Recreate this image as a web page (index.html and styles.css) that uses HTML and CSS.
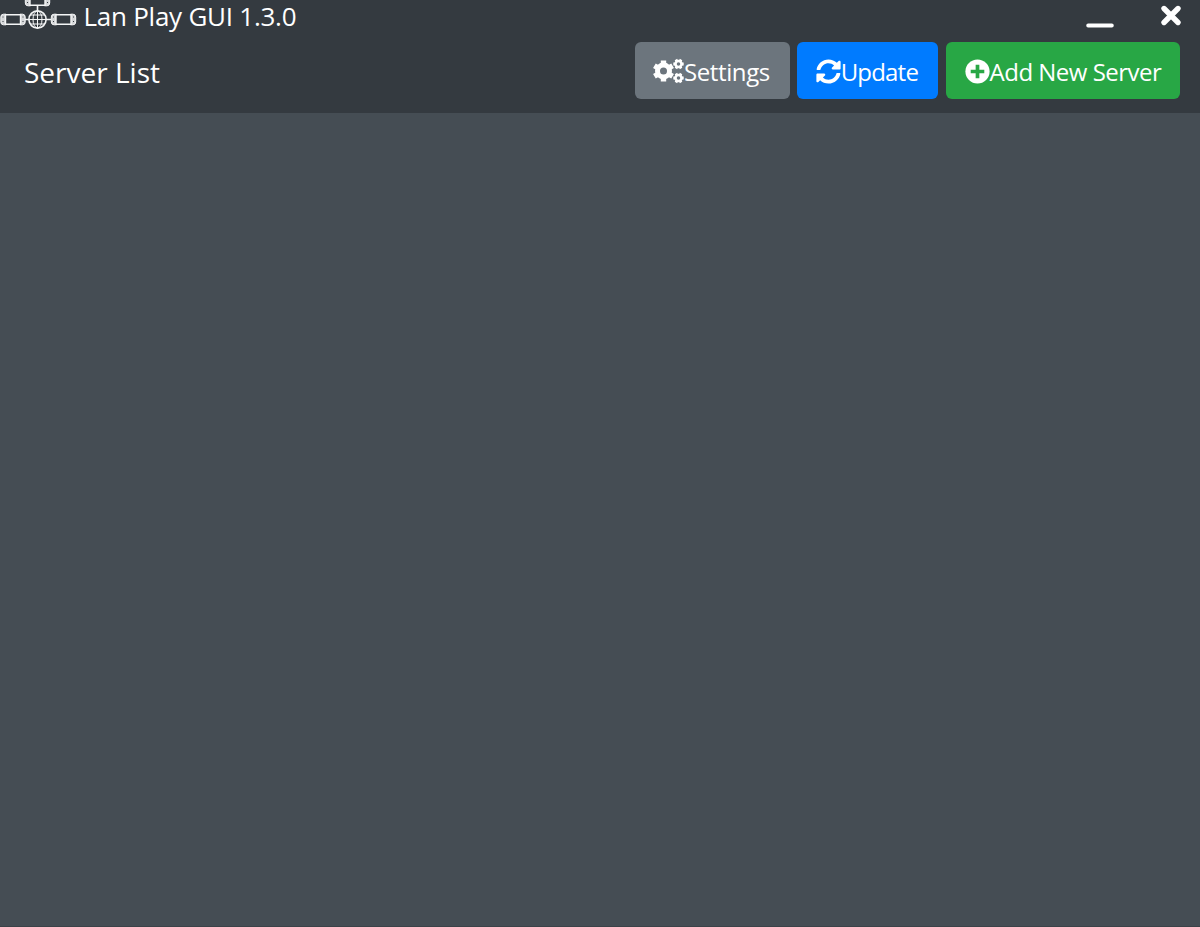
FILE: index.html
```html
<!DOCTYPE html>
<html lang="en">
<head>
<meta charset="utf-8">
<title>Lan Play GUI</title>
<link rel="stylesheet" href="styles.css">
</head>
<body>
<div class="app">
  <header class="header">
    <div class="titlebar">
      <svg class="logo" width="78" height="32" viewBox="0 0 78 32" fill="none" stroke="#f4f5f6">
        <defs>
          <g id="console">
            <path d="M6 .7H3.5Q.8 .7 .8 3.5v5Q.8 11.3 3.5 11.3H6zM20 .7h2.500Q25.200 .7 25.200 3.500v5q0 2.800-2.700 2.800H20z" fill="#d5d7d9"/>
            <path d="M5.500 1.200h15v9.600h-15z" fill="#343a40" stroke-width="1.400"/>
            <path d="M2.500 3.500h1M2.500 8h1M22.500 3.500h1M22.500 8h1" stroke="#343a40"/>
          </g>
        </defs>
        <use href="#console" x="0" y="13.500"/>
        <use href="#console" x="50.500" y="13.500"/>
        <use href="#console" x="24.500" y="-5.500"/>
        <path d="M37.500 6v5M25 19.500h4M46 19.500h5" stroke-width="1.600"/>
        <circle cx="37.500" cy="19.500" r="8.600" stroke-width="1.600"/>
        <path d="M37.500 11v17M29 19.500h17M31 15h13M31 24h13" stroke-width="1"/>
        <ellipse cx="37.500" cy="19.500" rx="4.500" ry="8.500" stroke-width="1"/>
      </svg>
      <h1 class="title">Lan Play GUI 1.3.0</h1>
      <div class="controls">
        <svg width="28" height="30" viewBox="0 0 28 30"><rect x=".3" y="23.400" width="27.400" height="4.200" rx="1.800" fill="#fff"/></svg>
        <svg width="22" height="30" viewBox="0 0 22 30"><path d="M4 8.500l14 14M18 8.500l-14 14" stroke="#fff" stroke-width="5.400" stroke-linecap="round"/></svg>
      </div>
    </div>
    <div class="toolbar">
      <h2 class="heading">Server List</h2>
      <div class="actions">
        <button class="btn settings">
          <svg width="31" height="26" viewBox="0 0 31 26" fill="none" stroke="#fff">
            <circle cx="10.500" cy="13" r="6" stroke-width="5"/>
            <path d="M10.500 2.500v4M10.500 19.500v4M1.400 7.750l3.500 2M16.100 16.250l3.500 2M1.400 18.250l3.500-2M16.100 9.750l3.500-2" stroke-width="5.400"/>
            <g id="cog">
              <circle cx="25.500" cy="6" r="3" stroke-width="2.500"/>
              <path d="M20.300 6h2M28.700 6h2M22.900 1.500l1 1.700M27.100 8.800l1 1.700M28.100 1.500l-1 1.700M23.900 8.800l-1 1.700" stroke-width="2.800"/>
            </g>
            <use href="#cog" y="14"/>
          </svg><span>Settings</span>
        </button>
        <button class="btn update">
          <svg width="25" height="25" viewBox="0 0 512 512" fill="#fff"><path d="M370.720 133.280C339.458 104.008 298.888 87.962 255.848 88c-77.458.068-144.328 53.178-162.791 126.850-1.344 5.363-6.122 9.150-11.651 9.150H24.103c-7.498 0-13.194-6.807-11.807-14.176C33.933 94.924 134.813 8 256 8c66.448 0 126.791 26.136 171.315 68.685L463.030 40.970C478.149 25.851 504 36.559 504 57.941V192c0 13.255-10.745 24-24 24H345.941c-21.382 0-32.090-25.851-16.971-40.971l41.750-41.749zM32 296h134.059c21.382 0 32.090 25.851 16.971 40.971l-41.750 41.750c31.262 29.273 71.835 45.319 114.876 45.280 77.418-.070 144.315-53.144 162.787-126.849 1.344-5.363 6.122-9.150 11.651-9.150h57.304c7.498 0 13.194 6.807 11.807 14.176C478.067 417.076 377.187 504 256 504c-66.448 0-126.791-26.136-171.315-68.685L48.970 471.030C33.851 486.149 8 475.441 8 454.059V320c0-13.255 10.745-24 24-24z"/></svg><span>Update</span>
        </button>
        <button class="btn add">
          <svg width="25" height="25" viewBox="0 0 25 25"><circle cx="12.500" cy="12.500" r="12.100" fill="#fff"/><path d="M12.500 5.700v13.600M5.700 12.500h13.600" stroke="#28a745" stroke-width="3.700"/></svg><span>Add New Server</span>
        </button>
      </div>
    </div>
  </header>
  <main class="servers"></main>
</div>
</body>
</html>
```
FILE: styles.css
```css
* { box-sizing: border-box; }
body {
  margin: 0;
  background: #454d54;
  color: #fff;
  font-family: "Open Sans", "Noto Sans", sans-serif;
}
.app { display: flex; flex-direction: column; height: 927px; }
.header { height: 113px; background: #343a40; }
.titlebar { display: flex; height: 32px; }
.logo { flex: none; }
.title {
  margin: 0 0 0 5.500px;
  font-size: 26px;
  font-weight: 400;
  line-height: 32px;
  letter-spacing: -.25px;
  white-space: nowrap;
}
.controls { display: flex; gap: 46px; margin-left: auto; padding-right: 18px; }
.toolbar {
  display: flex;
  justify-content: space-between;
  padding: 10px 19.700px 0 24px;
}
.heading { margin: 0; font-size: 28px; font-weight: 400; line-height: 61px; white-space: nowrap; }
.actions { display: flex; gap: 7.600px; }
.btn {
  display: flex;
  align-items: center;
  height: 57px;
  padding: 0 0 0 18.500px;
  border: 0;
  border-radius: 6px;
  color: #fff;
  font: 400 24px/57px "Open Sans", "Noto Sans", sans-serif;
  letter-spacing: -.4px;
  white-space: nowrap;
}
.btn svg { flex: none; margin-top: 1px; }
.btn span { padding-top: 2px; }
.settings { width: 155px; background: #6c757d; }
.update { width: 140.800px; background: #007bff; letter-spacing: -.8px; }
.add { width: 234.800px; padding-left: 19px; background: #28a745; letter-spacing: -.5px; }
.servers { flex: 1; border-bottom: 1px solid #3b4248; }
```
